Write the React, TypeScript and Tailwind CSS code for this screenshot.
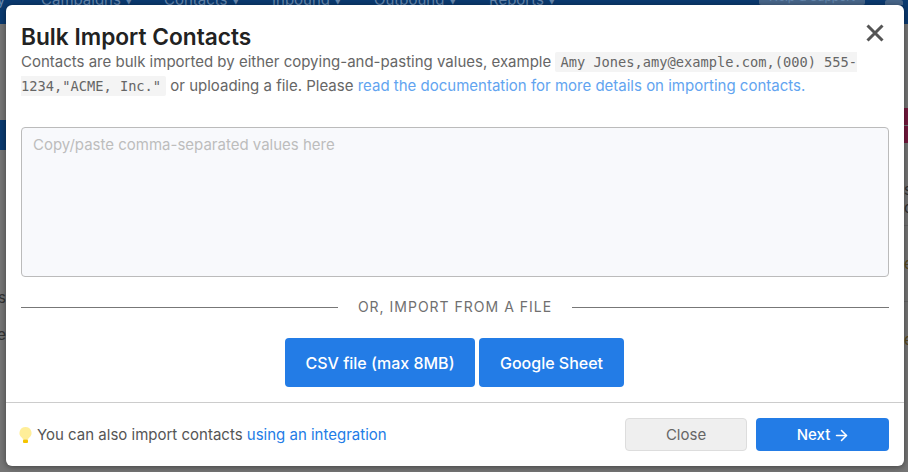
import { ArrowRight } from 'lucide-react'

function Backdrop() {
  return (
    <div className="absolute inset-0 flex flex-col bg-[#757575] text-[15px] leading-[20px]">
      <div className="flex h-[24px] shrink-0 items-start overflow-hidden bg-[#0b3a70] text-[#6486ad]">
        <div className="-mt-[10px] flex w-[908px] shrink-0 items-start">
          <span className="-ml-[3px] w-[44px]">y</span>
          <span className="w-[123px]">Campaigns ▾</span>
          <span className="w-[108px]">Contacts ▾</span>
          <span className="w-[102px]">Inbound ▾</span>
          <span className="w-[115px]">Outbound ▾</span>
          <span className="w-[270px]">Reports ▾</span>
          <span className="h-[15px] w-[106px] rounded-[2px] bg-[#48668a] text-center text-[12px] leading-[14px]">Help &amp; Support</span>
          <span className="ml-[20px] mt-[10px] h-[5px] w-[18px] rounded-t-[2px] bg-[#48668a]" />
        </div>
      </div>
      <div className="flex flex-1 justify-between overflow-hidden">
        <div className="flex w-[6px] flex-col items-end text-[#333333]">
          <div className="mt-[96px] h-[30px] w-[6px] shrink-0 bg-[#0b3a70]" />
          <span className="mt-[138px]">s</span>
          <span className="mt-[17px] whitespace-nowrap">ie</span>
        </div>
        <div className="flex w-[4px] flex-col text-[#333333]">
          <div className="mt-[84px] h-[17px] w-[4px] shrink-0 bg-[#751a3e]" />
          <div className="mt-px h-[17px] w-[4px] shrink-0 bg-[#751a3e]" />
          <span className="mt-[37px]">s</span>
          <span className="-mt-[2px]">o</span>
          <div className="mt-[7px] h-px w-[4px] shrink-0 bg-[#666666]" />
          <span className="mt-[28px] text-[#5a4a20]">e</span>
          <div className="mt-[27px] h-px w-[4px] shrink-0 bg-[#666666]" />
          <span className="mt-[28px] text-[#5a4a20]">e</span>
        </div>
      </div>
    </div>
  )
}

export default function App() {
  return (
    <div className="relative h-[472px] w-[908px] overflow-hidden font-['Inter',sans-serif]">
      <Backdrop />
      <div className="absolute left-[6px] top-[5px] flex h-[461px] w-[898px] flex-col rounded-[6px] bg-white shadow-[0_1px_6px_rgba(0,0,0,0.45)]">
        <div className="relative px-[15px] pt-[18px]">
          <h2 className="text-[22.7px] font-semibold leading-[27px] text-[#222222]">Bulk Import Contacts</h2>
          <button type="button" className="absolute right-[20px] top-[19px]">
            <svg width="18" height="18" viewBox="0 0 18 18" className="block">
              <path d="M1.5 1.5L16.5 16.5M16.5 1.5L1.5 16.5" stroke="#555555" strokeWidth="3" fill="none" />
            </svg>
          </button>
          <p className="text-[15px] leading-[23px] text-[#666666]">
            Contacts are bulk imported by either copying-and-pasting values, example{' '}
            <code className="rounded-[2px] bg-[#f4f4f4] px-[5px] py-[2px] font-['DejaVu_Sans_Mono',monospace] text-[13.7px] text-[#666666]">
              Amy Jones,amy@example.com,(000) 555-1234,"ACME, Inc."
            </code>{' '}
            or uploading a file. Please{' '}
            <a href="#" className="text-[#62a4f0]">read the documentation for more details on importing contacts.</a>
          </p>
          <textarea
            className="mt-[29px] block h-[150px] w-full resize-none rounded-[4px] border border-[#bbbbbb] bg-[#f8f9fc] px-[11px] py-[7px] text-[15px] leading-[20px] outline-none placeholder:text-[#bdbdbd]"
            placeholder="Copy/paste comma-separated values here"
          />
          <div className="mt-[20px] flex items-center gap-[20px]">
            <div className="h-px flex-1 bg-[#777777]" />
            <span className="text-[14px] leading-[20px] tracking-[1px] text-[#707070]">OR, IMPORT FROM A FILE</span>
            <div className="h-px flex-1 bg-[#777777]" />
          </div>
          <div className="mt-[21px] flex justify-center gap-[4px] pr-[1px]">
            <button type="button" className="h-[49px] w-[190px] rounded-[4px] bg-[#237ce6] text-[16px] font-medium text-white">CSV file (max 8MB)</button>
            <button type="button" className="h-[49px] w-[145px] rounded-[4px] bg-[#237ce6] text-[16px] font-medium text-white">Google Sheet</button>
          </div>
        </div>
        <div className="mt-[15px] flex flex-1 items-center justify-between border-t border-[#cccccc] pl-[12px] pr-[15px]">
          <div className="flex items-center text-[15px] leading-[20px] text-[#555555]">
            <svg width="15" height="18" viewBox="0 0 15 18" className="mr-[4px]">
              <path d="M7.5 1a6 6 0 0 0-3.6 10.8c.6.5.9 1 1 1.7h5.2c.1-.7.4-1.2 1-1.7A6 6 0 0 0 7.5 1z" fill="#ffee99" />
              <rect x="5" y="13.5" width="5" height="3.5" rx="1" fill="#f5c400" />
            </svg>
            <span>You can also import contacts&nbsp;</span>
            <a href="#" className="text-[#237ce6]">using an integration</a>
          </div>
          <div className="flex gap-[9px]">
            <button type="button" className="h-[33px] w-[122px] rounded-[4px] border border-[#dddddd] bg-[#efefef] pt-px text-[15px] text-[#666666]">Close</button>
            <button type="button" className="flex h-[33px] w-[133px] items-center justify-center gap-[3px] rounded-[4px] bg-[#237ce6] pl-[2px] pt-px text-[15px] font-medium text-white">
              Next <ArrowRight size={17} strokeWidth={2.2} />
            </button>
          </div>
        </div>
      </div>
    </div>
  )
}
